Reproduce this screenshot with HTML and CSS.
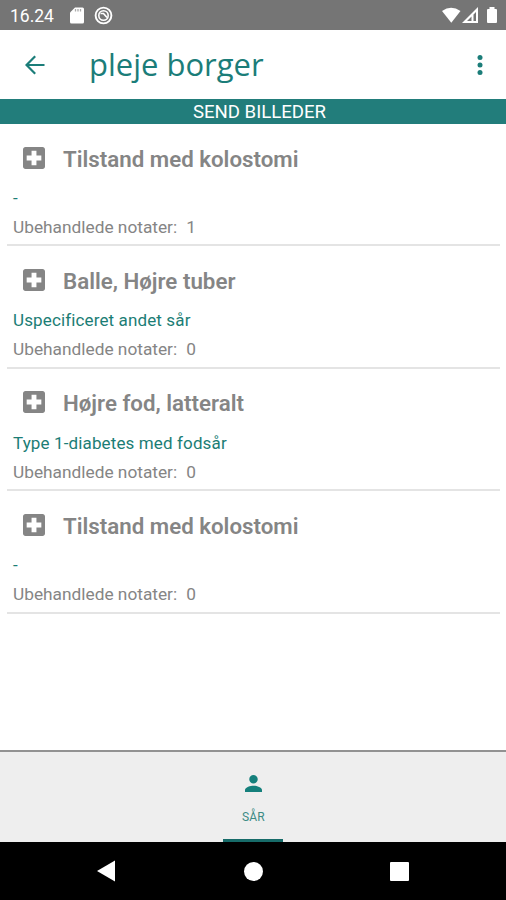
FILE: index.html
```html
<!DOCTYPE html>
<html lang="da">
<head>
<meta charset="utf-8">
<title>pleje borger</title>
<link rel="stylesheet" href="styles.css">
</head>
<body>
<svg class="defs" width="0" height="0" aria-hidden="true">
  <symbol id="cross" viewBox="3 3 18 18"><path d="M19 3H5c-1.100 0-2 .9-2 2v14c0 1.100.9 2 2 2h14c1.100 0 2-.9 2-2V5c0-1.100-.9-2-2-2zm-1 11h-4v4h-4v-4H6v-4h4V6h4v4h4v4z"/></symbol>
</svg>
<div class="screen">
  <div class="status">
    <span class="clock">16.24</span>
    <svg class="sd" width="14" height="17" viewBox="0 0 14 17"><path fill="#fff" d="M5 .5h7.500Q14 .5 14 2v13q0 1.500-1.500 1.500h-11Q0 16.500 0 15V5.500z"/><path stroke="#aaa" stroke-width="1.300" d="M5.500 2v2.500M8 2v2.500M10.500 2v2.500"/></svg>
    <svg class="ring" width="19" height="19" viewBox="0 0 19 19" fill="none" stroke="#fff"><circle cx="9.500" cy="9.500" r="7.900" stroke-width="1.900"/><circle cx="9.500" cy="9.500" r="4.700" stroke-width="1.600"/><path stroke-width="1.700" d="M6.500 7.500h3l3.500 4"/></svg>
    <span class="fill"></span>
    <svg width="56" height="18" viewBox="0 0 56 18"><path fill="#fff" d="M0 4Q9 -2.500 18.500 4L9.300 15.800z"/><path fill="#fff" fill-rule="evenodd" d="M36 0v16H20zM34 5v9h-2.500V7.500zM29.500 9.500v4.500h-4.500z"/><path fill="#fff" d="M47.500 0h5v2H54q1 0 1 1v12q0 1-1 1h-8q-1 0-1-1V3q0-1 1-1h1.500z"/></svg>
  </div>
  <header class="appbar">
    <svg class="back" width="20" height="20" viewBox="0 0 20 20" fill="none" stroke="#1b7d79" stroke-width="2.200"><path d="M19.500 10H2M10.200 1.200L1.500 10l8.700 8.800"/></svg>
    <h1>pleje borger</h1>
    <svg class="more" width="6" height="20" viewBox="0 0 6 20" fill="#1b7d79"><circle cx="3" cy="2.600" r="2.500"/><circle cx="3" cy="10" r="2.500"/><circle cx="3" cy="17.400" r="2.500"/></svg>
  </header>
  <div class="send">SEND BILLEDER</div>
  <main>
    <section class="item">
      <div class="head"><svg><use href="#cross"/></svg><h2>Tilstand med kolostomi</h2></div>
      <p class="type">-</p>
      <p class="notes"><span>Ubehandlede notater:</span><span>1</span></p>
    </section>
    <section class="item">
      <div class="head"><svg><use href="#cross"/></svg><h2>Balle, Højre tuber</h2></div>
      <p class="type">Uspecificeret andet sår</p>
      <p class="notes"><span>Ubehandlede notater:</span><span>0</span></p>
    </section>
    <section class="item">
      <div class="head"><svg><use href="#cross"/></svg><h2>Højre fod, latteralt</h2></div>
      <p class="type">Type 1-diabetes med fodsår</p>
      <p class="notes"><span>Ubehandlede notater:</span><span>0</span></p>
    </section>
    <section class="item">
      <div class="head"><svg><use href="#cross"/></svg><h2>Tilstand med kolostomi</h2></div>
      <p class="type">-</p>
      <p class="notes"><span>Ubehandlede notater:</span><span>0</span></p>
    </section>
  </main>
  <nav class="tabs">
    <div class="tab">
      <svg width="17" height="17" viewBox="4 4 16 16" fill="#15807c"><path d="M12 12c2.210 0 4-1.790 4-4s-1.790-4-4-4-4 1.790-4 4 1.790 4 4 4zm0 2c-2.670 0-8 1.340-8 4v2h16v-2c0-2.660-5.330-4-8-4z"/></svg>
      <span>SÅR</span>
    </div>
  </nav>
  <div class="system">
    <svg width="18" height="22" viewBox="0 0 18 22"><path fill="#fff" d="M18 .5v21L0 11z"/></svg>
    <span class="home"></span>
    <span class="recent"></span>
  </div>
</div>
</body>
</html>
```

FILE: styles.css
```css
* { box-sizing: border-box; }
body { margin: 0; background: #fff; font-family: Roboto, sans-serif; }
h1, h2, p { margin: 0; white-space: nowrap; }
.defs { display: none; }
.screen { width: 506px; height: 900px; display: flex; flex-direction: column; overflow: hidden; }
.status { height: 30px; flex: none; background: #757575; display: flex; align-items: center; padding: 1px 8px 0 10px; color: #fff; }
.clock { width: 60px; font-size: 17.5px; }
.ring { margin-left: 10px; }
.fill { flex: 1; }
.appbar { height: 69px; flex: none; display: flex; align-items: center; padding: 0 23px 0 25px; color: #1b7d79; }
.appbar h1 { flex: 1; margin: -2px 0 0 44px; font: 400 31px/40px "Open Sans", sans-serif; }
.send { height: 25px; flex: none; background: #227d7b; color: #fff; text-align: center; font-size: 18.6px; line-height: 26px; padding-left: 13px; }
main { flex: 1; min-height: 0; padding: 0 6px 0 7px; }
.item { height: 122.4px; padding: 20px 0 0 6px; border-bottom: 2px solid #e4e4e4; color: #858585; }
.head { display: flex; align-items: center; height: 29px; padding-left: 10px; gap: 18px; }
.head svg { width: 22px; height: 22px; fill: #858585; margin-top: -2px; }
.head h2 { font-size: 22.3px; line-height: 30px; font-weight: 600; }
.type { margin-top: 13px; font-size: 17px; line-height: 24px; letter-spacing: 0.13px; color: #1b7d75; }
.notes { display: flex; gap: 9px; margin-top: 5px; font-size: 17.3px; line-height: 25px; }
.tabs { height: 92px; flex: none; background: #eee; border-top: 2px solid #929292; display: flex; justify-content: center; }
.tab { width: 60px; border-bottom: 3px solid #176b69; display: flex; flex-direction: column; align-items: center; padding-top: 23px; color: #3c8b85; font-size: 12px; }
.tab span { margin: 17px 0 0 1px; line-height: 16px; letter-spacing: 0.2px; }
.system { height: 58px; flex: none; background: #000; display: flex; justify-content: space-between; align-items: center; padding: 0 97px; }
.home { width: 19px; height: 19px; margin-left: 2px; border-radius: 50%; background: #fff; }
.recent { width: 19px; height: 19px; border-radius: 1px; background: #fff; }
```
